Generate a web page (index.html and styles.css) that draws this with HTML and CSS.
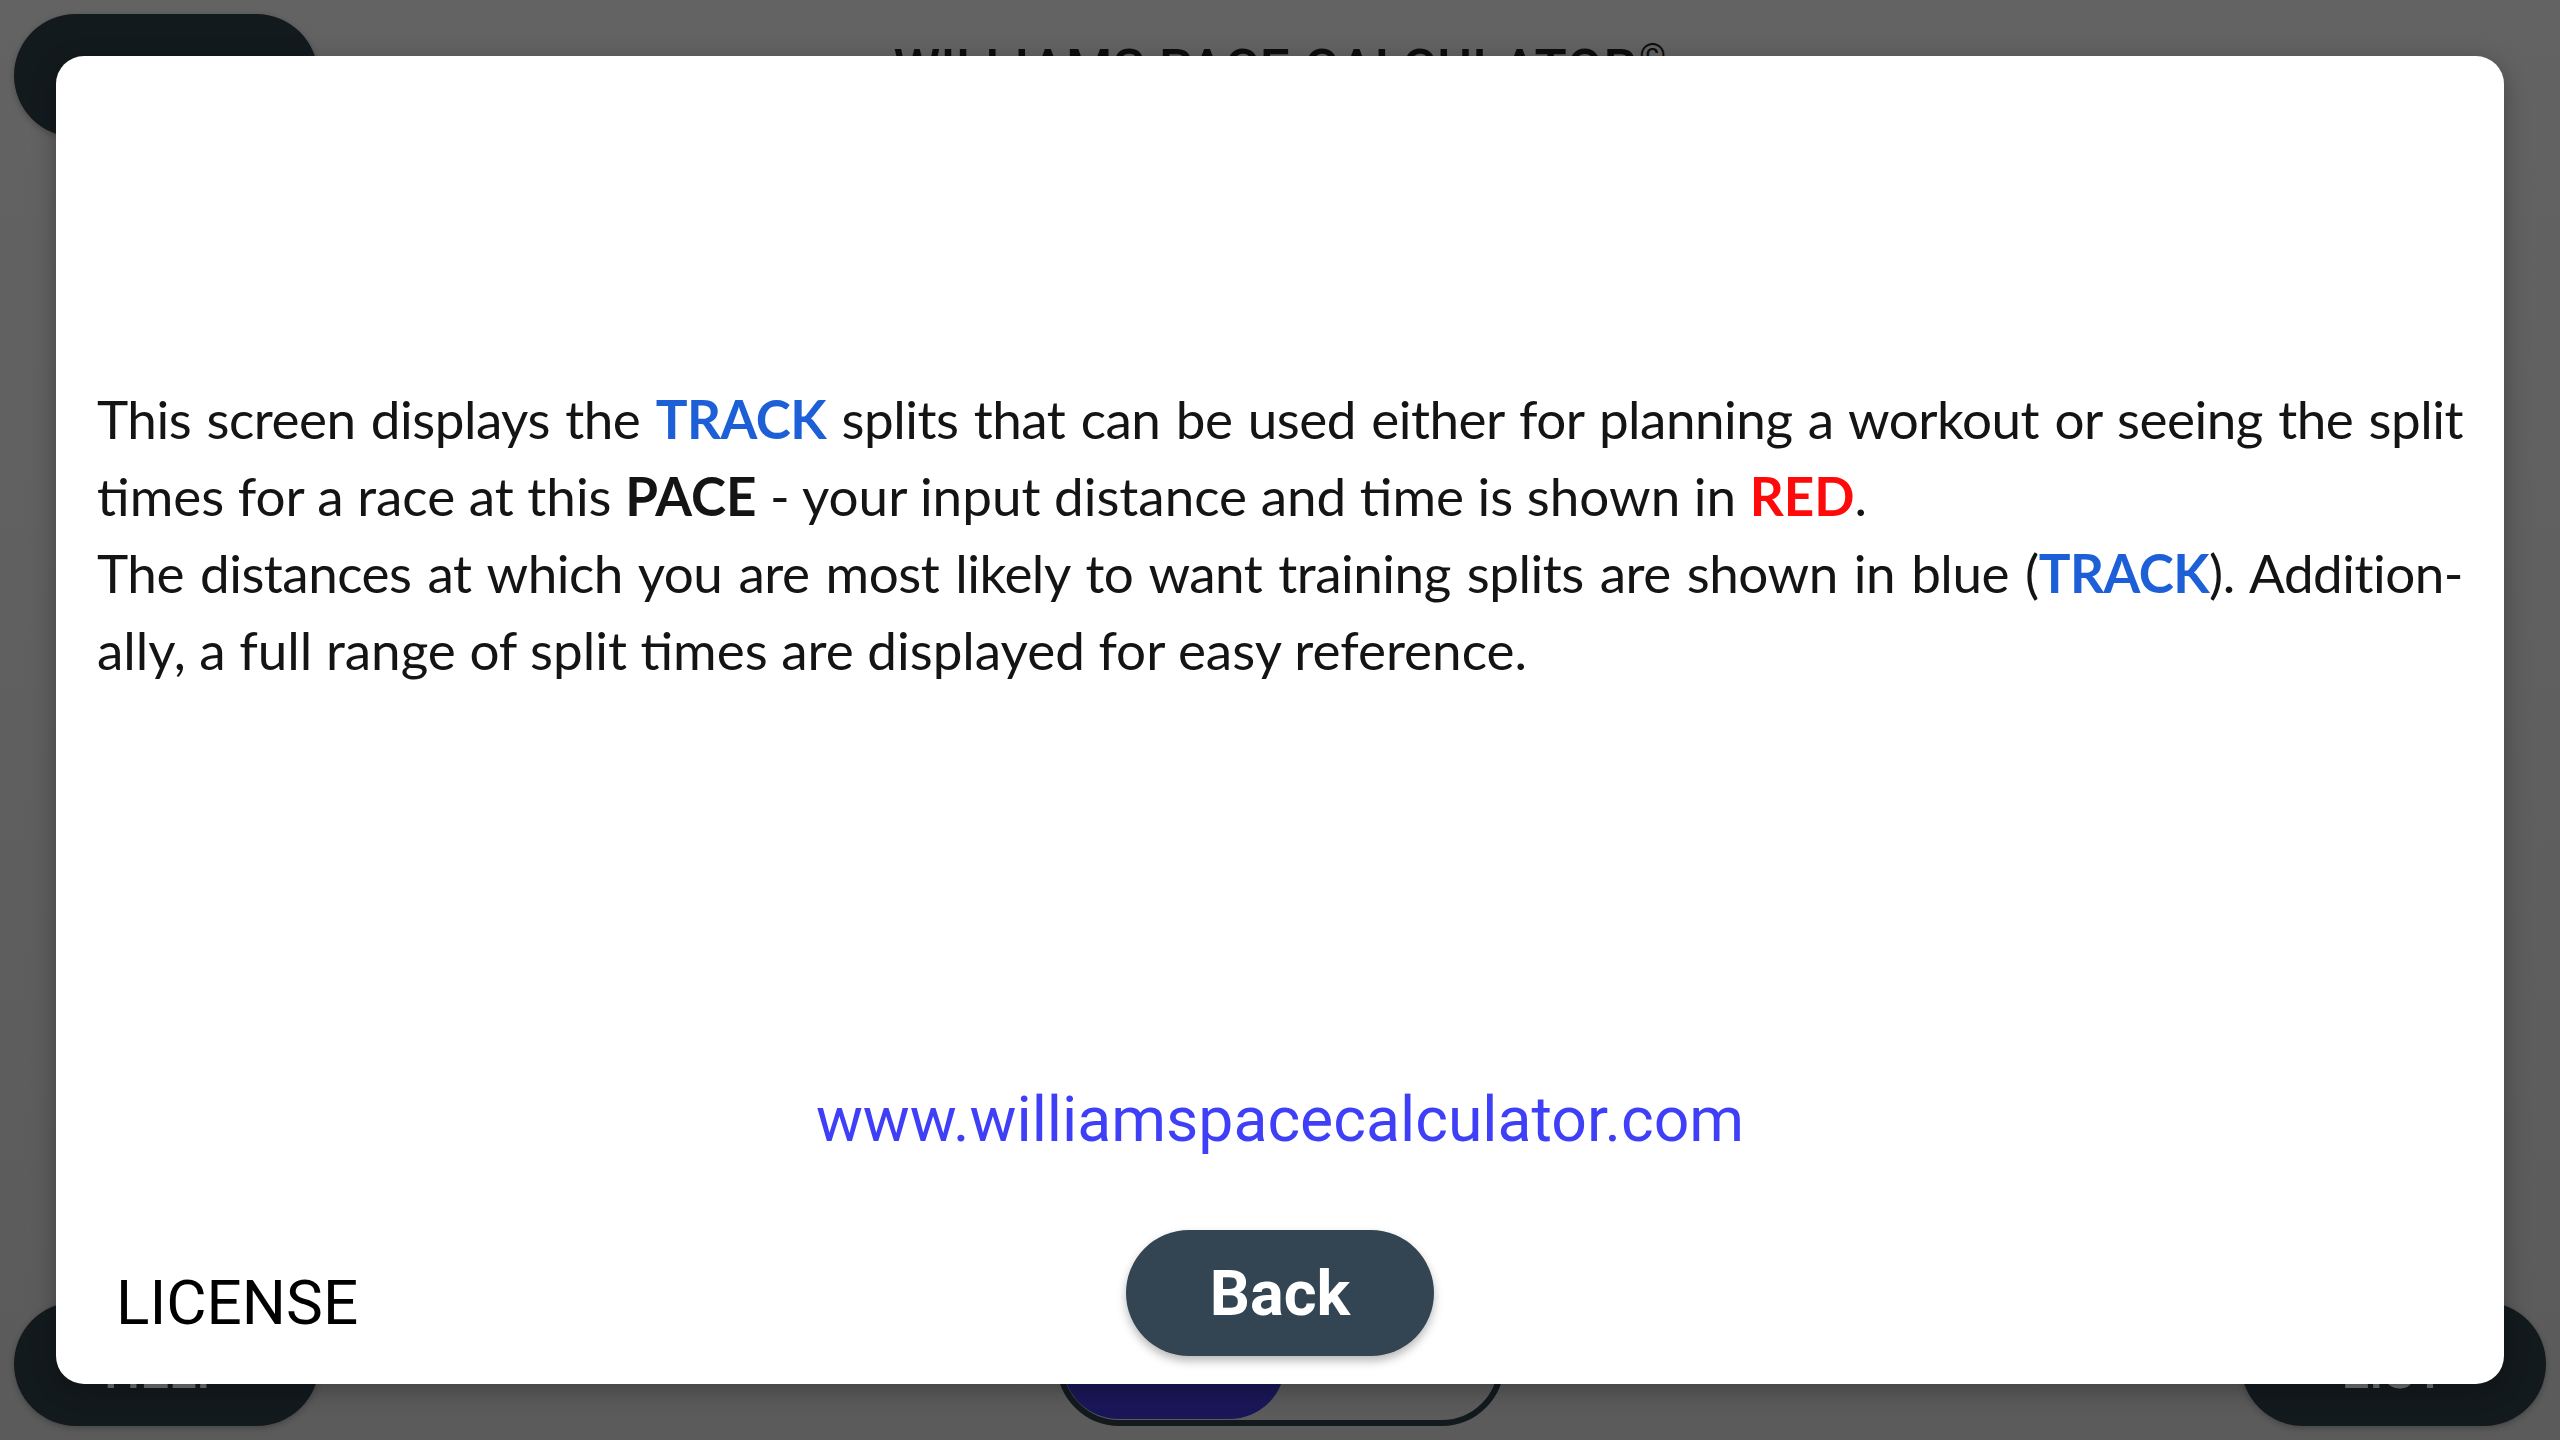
FILE: index.html
```html
<!DOCTYPE html>
<html lang="en">
<head>
<meta charset="utf-8">
<title>Williams Pace Calculator</title>
<link rel="stylesheet" href="styles.css">
</head>
<body>
<div class="app">
  <header class="app-header">
    <div class="pill-btn"></div>
    <div class="app-title">WILLIAMS PACE CALCULATOR<sup class="copy">©</sup></div>
    <div class="spacer"></div>
  </header>
  <footer class="app-footer">
    <div class="pill-btn"><span class="pill-label">HELP</span></div>
    <div class="segmented">
      <div class="seg-active"></div>
    </div>
    <div class="pill-btn"><span class="pill-label">LIST</span></div>
  </footer>
</div>

<div class="dialog">
  <div class="help-text">
    <div class="line fill">This screen displays the <b class="blue">TRACK</b> splits that can be used either for planning a workout or seeing the split</div>
    <div class="line">times for a race at this <b>PACE</b> - your input distance and time is shown in <b class="red">RED</b>.</div>
    <div class="line fill">The distances at which you are most likely to want training splits are shown in blue (<b class="blue">TRACK</b>). Addition-</div>
    <div class="line">ally, a full range of split times are displayed for easy reference.</div>
  </div>
  <div class="url">www.williamspacecalculator.com</div>
  <div class="dialog-footer">
    <div class="license">LICENSE</div>
    <button class="back-btn">Back</button>
    <div></div>
  </div>
</div>
</body>
</html>
```
FILE: styles.css
```css
html, body {
  margin: 0;
  padding: 0;
}
body {
  width: 2560px;
  height: 1440px;
  overflow: hidden;
  background: linear-gradient(#636363, #5b5b5b);
  font-family: Roboto, "Liberation Sans", sans-serif;
  position: relative;
}
.app {
  box-sizing: border-box;
  height: 1440px;
  padding: 14px;
  display: flex;
  flex-direction: column;
  justify-content: space-between;
}
.app-header {
  display: grid;
  grid-template-columns: 304px 1fr 304px;
  height: 123px;
}
.pill-btn {
  width: 305px;
  height: 124px;
  border-radius: 62px;
  background: #131a1e;
  display: flex;
  align-items: center;
  justify-content: center;
  box-shadow: 0 2px 6px rgba(0,0,0,0.25);
}
.app-header .pill-btn {
  width: 304px;
  height: 123px;
}
.pill-label {
  color: #6f7274;
  font-size: 51px;
  font-weight: 500;
  line-height: 1;
  margin-top: 12px;
}
.app-title {
  justify-self: center;
  align-self: start;
  margin-top: 29px;
  font-size: 53px;
  line-height: 53px;
  font-weight: 500;
  color: #0d0d0d;
  letter-spacing: 0.5px;
}
.copy {
  font-size: 34px;
  font-weight: 400;
  vertical-align: top;
  position: relative;
  top: -14px;
  margin-left: 2px;
}
.app-footer {
  display: flex;
  justify-content: space-between;
  align-items: flex-end;
}
.segmented {
  box-sizing: border-box;
  width: 447px;
  height: 124px;
  border: 6px solid #131a1e;
  border-radius: 62px;
  padding: 0 0 1px 0;
  display: flex;
}
.seg-active {
  width: 222px;
  height: 100%;
  border-radius: 56px;
  background: #1a1759;
}

.dialog {
  position: absolute;
  left: 56px;
  top: 56px;
  width: 2448px;
  height: 1328px;
  box-sizing: border-box;
  background: #ffffff;
  border-radius: 28px;
  box-shadow: 0 6px 24px rgba(0,0,0,0.3);
  display: flex;
  flex-direction: column;
}
.help-text {
  margin-top: 324px;
  padding: 0 41px;
  font-family: Lato, "Open Sans", sans-serif;
  font-size: 53px;
  line-height: 77px;
  height: 308px;
  color: #141414;
}
.line {
  white-space: nowrap;
}
.line.fill {
  text-align: justify;
  text-align-last: justify;
  white-space: normal;
  letter-spacing: -0.5px;
  word-spacing: -3px;
}
.help-text b {
  font-weight: 700;
}
.blue {
  color: #1d5fd6;
}
.red {
  color: #ff0a0a;
}
.url {
  margin-top: 396px;
  text-align: center;
  font-size: 62.5px;
  line-height: 72px;
  color: #3f3ff7;
}
.dialog-footer {
  margin-top: 74px;
  display: grid;
  grid-template-columns: 1fr auto 1fr;
  height: 126px;
}
.license {
  align-self: start;
  margin-top: 37px;
  margin-left: 60px;
  font-size: 62px;
  line-height: 72px;
  color: #000;
}
.back-btn {
  width: 308px;
  height: 126px;
  border: none;
  border-radius: 63px;
  background: #334552;
  color: #ffffff;
  font-family: Roboto, "Liberation Sans", sans-serif;
  font-weight: 700;
  font-size: 63px;
  padding: 0;
  box-shadow: 0 5px 10px rgba(0,0,0,0.28);
}
```
